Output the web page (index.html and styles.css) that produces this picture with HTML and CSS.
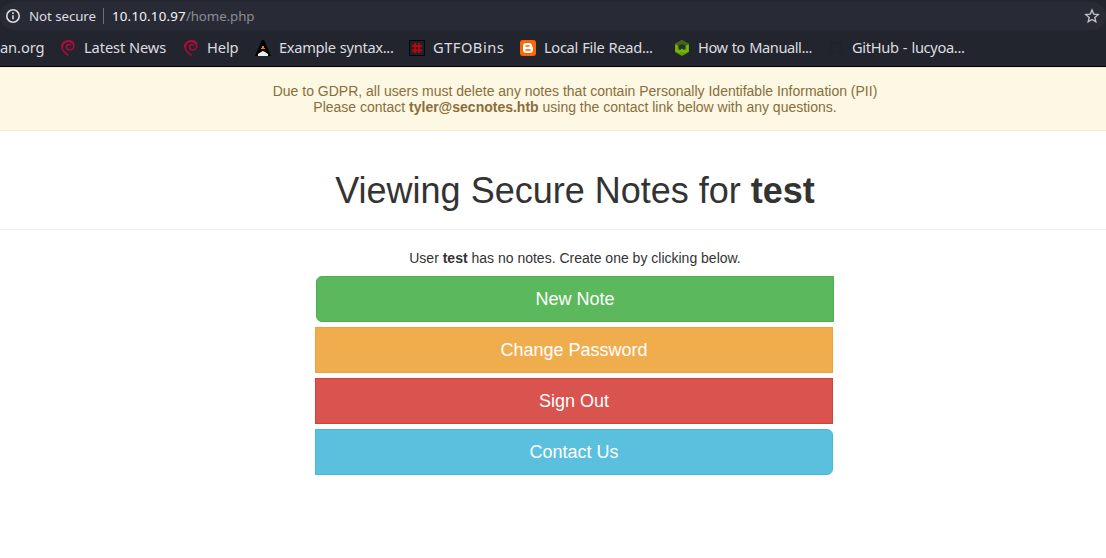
FILE: index.html
```html
<!DOCTYPE html>
<html lang="en">
<head>
<meta charset="utf-8">
<title>Secure Notes</title>
<link rel="stylesheet" href="styles.css">
</head>
<body>
<svg class="defs" width="0" height="0" aria-hidden="true">
  <symbol id="swirl" viewBox="0 0 16 16">
    <path d="M8.500 15.300C5.200 13.200 2 10.600 2 6.700 2 3.200 5 1 8.200 1c3.300 0 5.600 2 5.600 4.800 0 2.500-1.800 4.200-4 4.200-2 0-3.300-1.200-3.300-2.900 0-1.500 1.100-2.500 2.500-2.500.9 0 1.500.4 1.800 1" fill="none" stroke="#b3093f" stroke-width="1.500"/>
    <path d="M2.200 7.500C1.900 4 4.500 1.200 8.200 1.200c2.500 0 4.600 1.200 5.300 3" fill="none" stroke="#b3093f" stroke-width="2.200"/>
  </symbol>
</svg>
<header class="browser">
  <div class="omnibox">
    <svg class="info" viewBox="0 0 16 16"><circle cx="8" cy="8" r="6.200"/><path d="M8 7.200v4M8 4.300v1.700"/></svg>
    <span class="status">Not secure</span>
    <span class="divider"></span>
    <span class="url"><span class="host">10.10.10.97</span><span class="path">/home.php</span></span>
    <svg class="star" viewBox="0 0 16 16"><path d="M8 2l1.700 4.100 4.500.4-3.400 2.900 1 4.400L8 11.500l-3.800 2.300 1-4.400L1.800 6.500l4.500-.4z"/></svg>
  </div>
  <nav class="bookmarks">
    <a>an.org</a>
    <a><svg viewBox="0 0 16 16"><use href="#swirl"/></svg>Latest News</a>
    <a><svg viewBox="0 0 16 16"><use href="#swirl"/></svg>Help</a>
    <a class="tight"><svg viewBox="0 0 16 16"><path d="M7 0h2l7 16H0z" fill="#000"/><path d="M7 6h2v2h1v1H6V8h1z" fill="#ff7b00"/><path d="M3 16v-2l3-2 2-1 2 1 3 2v2z" fill="#eee"/></svg>Example syntax...</a>
    <a class="wide"><svg viewBox="0 0 16 16"><path d="M0 0h16v16H0z" fill="#050507"/><path d="M1 1h14v14H1z" fill="#202027"/><path d="M6 3v10M10 3v10M3 6h10M3 10.500h10" stroke="#b9070d" stroke-width="1.900"/></svg>GTFOBins</a>
    <a class="tight"><svg viewBox="0 0 16 16"><rect width="16" height="16" rx="3" fill="#f60"/><path d="M6 3h3c2 0 3 1 3 3 0 1 1 .7 1 1.800V10c0 2-1 3-3 3H6c-2 0-3-1-3-3V6c0-2 1-3 3-3z" fill="#fff"/><path d="M6 6h3M6 10h4" stroke="#f60" stroke-width="1.500" stroke-linecap="round"/></svg>Local File Read...</a>
    <a class="tighter"><svg viewBox="0 0 16 16"><path d="M8 0l7 4v8l-7 4-7-4V4z" fill="#629d0b"/><path d="M8 0l7 4-3 2-4-2-4 2-3-2z" fill="#42651a"/><path d="M4.500 5.500L8 4l3.500 1.500v3L10 10 8 8.500 6 10 4.500 8.500z" fill="#26331f"/><path d="M2.500 5v5.500L5.500 12 8 10l2.500 2 3-1.500V5" fill="none" stroke="#7cb90b" stroke-width="1.700"/></svg>How to Manuall...</a>
    <a class="tighter last"><svg viewBox="0 0 16 16"><path d="M6 14.300v-2.500c-1.800.3-2.300-.8-3-1.500M10 14.300v-3c2.500-.4 3.500-1.600 3.500-4 0-1-.4-1.900-1-2.500V2.700L10 3.600H6l-2.500-.9v2.100C2.800 5.500 2.500 6.300 2.500 7.300c0 2.400 1 3.600 3.500 4" fill="none" stroke="#1f222a"/></svg>GitHub - lucyoa...</a>
  </nav>
</header>
<main class="page">
  <div class="alert">Due to GDPR, all users must delete any notes that contain Personally Identifable Information (PII)<br>Please contact <strong>tyler@secnotes.htb</strong> using the contact link below with any questions.</div>
  <div class="page-header"><h1>Viewing Secure Notes for <b>test</b></h1></div>
  <p class="empty">User <b>test</b> has no notes. Create one by clicking below.</p>
  <div class="btn-group">
    <a class="btn success">New Note</a>
    <a class="btn warning">Change Password</a>
    <a class="btn danger">Sign Out</a>
    <a class="btn contact">Contact Us</a>
  </div>
</main>
</body>
</html>
```

FILE: styles.css
```css
* { box-sizing: border-box; }
body { margin: 0; background: #fff; overflow: hidden; }
.defs { display: block; }
.browser {
  height: 67px;
  padding-top: 2px;
  background: #23252e;
  border-bottom: 1px solid #000;
  font-family: "Noto Sans", sans-serif;
  color: #dcdde0;
}
.omnibox {
  display: flex;
  align-items: center;
  height: 28px;
  padding: 0 6px 0 5px;
  border-radius: 14px;
  background: #282a35;
  font-size: 13.33px;
  white-space: nowrap;
}
.info, .star { width: 16px; height: 16px; fill: none; stroke: #dcdde0; }
.info { margin-right: 8px; stroke-width: 1.6; }
.star { margin-left: auto; stroke: #c0c1c5; stroke-width: 1.4; }
.status { letter-spacing: -0.08px; }
.divider { width: 1px; height: 16px; margin: 0 8px 0 7px; background: #6d6f76; }
.host { color: #f4f4f5; letter-spacing: 0.2px; }
.path { color: #8c8e94; letter-spacing: -0.1px; }
.bookmarks {
  display: grid;
  grid-template-columns: 60px 123px 72px 154px 111px 154px 154px 200px;
  height: 34px;
  font-size: 14.67px;
  line-height: 20px;
  white-space: nowrap;
}
.bookmarks a { display: flex; align-items: center; gap: 8px; letter-spacing: -0.1px; }
.bookmarks svg { width: 16px; height: 16px; flex: none; margin-top: 2px; }
.bookmarks .tight { letter-spacing: -0.33px; }
.bookmarks .tight, .bookmarks .tighter { word-spacing: 0.8px; }
.bookmarks .tighter { letter-spacing: -0.45px; }
.bookmarks .last { letter-spacing: -0.35px; }
.bookmarks .wide { letter-spacing: 0.5px; }
.page {
  width: 1150px;
  font: 14px/16px "Liberation Sans", Arial, sans-serif;
  color: #333;
  text-align: center;
}
.alert {
  padding: 15px;
  border: 1px solid #faebcc;
  border-width: 1px 0;
  background: #fcf8e3;
  color: #8a6d3b;
}
.page-header { margin: 40px 0 20px; padding-bottom: 9px; border-bottom: 1px solid #eee; }
h1 { margin: 0 0 10px; font-size: 36px; font-weight: 500; line-height: 39px; }
.empty { margin: 0 0 10px; }
.btn-group { display: flex; flex-direction: column; gap: 5px; width: 518px; margin: 0 auto 0 315px; }
.btn {
  height: 46px;
  padding: 10px 16px;
  border: 1px solid;
  color: #fff;
  font-size: 18px;
  line-height: 24px;
}
.success { margin: 0 -1px 0 1px; background: #5cb85c; border-color: #4cae4c; border-radius: 6px 0 0 6px; }
.warning { background: #f0ad4e; border-color: #eea236; }
.danger { background: #d9534f; border-color: #d43f3a; }
.contact { background: #5bc0de; border-color: #46b8da; border-radius: 0 6px 6px 0; }
```
